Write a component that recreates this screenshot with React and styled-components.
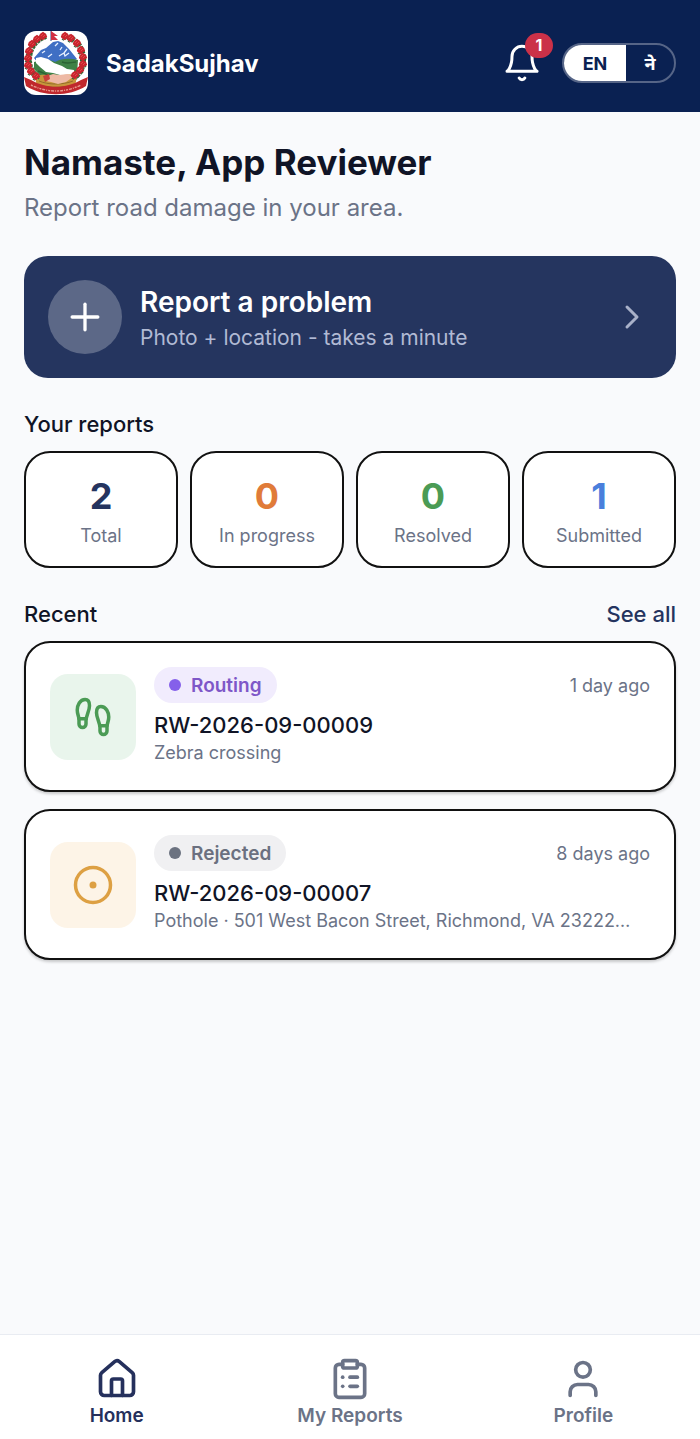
import React from "react";
import styled, { createGlobalStyle } from "styled-components";
import {
  ChevronRight,
  CircleDot,
  ClipboardList,
  Footprints,
  House,
  Plus,
  User,
} from "lucide-react";

const stats = [
  { label: "Total", value: 2, color: "#25345f" },
  { label: "In progress", value: 0, color: "#e07b39" },
  { label: "Resolved", value: 0, color: "#4b9b55" },
  { label: "Submitted", value: 1, color: "#4a7fdc" },
];

const reports = [
  {
    id: "RW-2026-09-00009",
    status: "Routing",
    statusColor: "#7e57c8",
    dot: "#8560ea",
    statusBg: "#f1ecfd",
    age: "1 day ago",
    text: "Zebra crossing",
    Icon: Footprints,
    iconColor: "#4b9b55",
    iconBg: "#e9f5ec",
  },
  {
    id: "RW-2026-09-00007",
    status: "Rejected",
    statusColor: "#6b7080",
    dot: "#6b7280",
    statusBg: "#f0f0f2",
    age: "8 days ago",
    text: "Pothole · 501 West Bacon Street, Richmond, VA 23222…",
    Icon: CircleDot,
    iconColor: "#dda043",
    iconBg: "#fdf4e7",
  },
];

const tabs = [
  { label: "Home", Icon: House, active: true },
  { label: "My Reports", Icon: ClipboardList },
  { label: "Profile", Icon: User },
];

// Rhododendrons of the wreath, left side then right side
const flowers = [
  [19, 5], [13, 8], [8, 13], [5, 20], [4, 27], [4, 34], [7, 40], [12, 45],
  [41, 5], [47, 7], [53, 12], [57, 19], [59, 26], [59, 33], [56, 39], [51, 44],
];

const Emblem = () => (
  <EmblemSvg viewBox="0 0 64 64" role="img" aria-label="Emblem of Nepal">
    <rect width="64" height="64" fill="#fff" />
    <path
      d="M22 5C12 8 5 17 5 29c0 8 4 15 11 19M40 5c13 3 19 12 19 24 0 8-4 15-11 19"
      fill="none"
      stroke="#3c6b3a"
      strokeWidth="6"
      strokeDasharray="3 1"
    />
    <path d="M10 27 17 19l5-2 7-6 5-1 5 2 6 6 8 10-9 5-17-2-13 1z" fill="#3f6fc4" />
    <path
      d="m31 15 3-3m4 4-2 3m7-1-3 4m-5 3 5-3 1 3 4-3m-21 4 4-3m-7-3-3 2"
      fill="none"
      stroke="#e8f1ff"
      strokeWidth="1.3"
    />
    <path d="M10 31c8-2 15-3 21 0 7-4 15-4 23-2l-1 14-10 4H18l-8-9z" fill="#3f8146" />
    <path d="M38 31c5 2 9 1 14 0M14 40c4 1 7 3 10 4" fill="none" stroke="#2c6334" strokeWidth="1.4" />
    <path
      d="m12 27 5-1 7 2 6 4 8 3 5 3 7 1 1 6-7 1-8-2-7-2-7-1-6-5-4-4z"
      fill="#fff"
    />
    <path d="M11 46c8-4 13-2 20 0 8-2 14-4 22-1l-2 11-19 4-19-4z" fill="#c8963c" />
    <path
      d="M15 50c9 4 24 4 34 0M14 54c10 3 25 3 36 0"
      fill="none"
      stroke="#926f2b"
      strokeWidth="1"
    />
    <path d="m21 46 8-3 6 1 9-1 5 3-7 5-8 2-7-2-5-1z" fill="#eeb9a5" />
    <path d="m19 45 6-2 1 5-5 3z" fill="#c9403b" />
    {flowers.map(([x, y]) => (
      <g key={`${x}-${y}`} transform={`translate(${x} ${y}) scale(1.05)`}>
        <path d="m-4 1 1-3 3-2 3 2 1 3-3 2-1 1-2-1z" fill="#c9252f" />
        <path d="m-2 0 2-2M0 1l2-2" stroke="#e8504f" strokeWidth="0.8" />
        <path d="m-3 3 2 1m3-1 1-1" stroke="#315f35" strokeWidth="1" />
      </g>
    ))}
    <path d="M27 0v10" stroke="#354a8b" strokeWidth="1" />
    <path d="m27 0 7 5h-4l4 4h-7z" fill="#d12f43" />
    <path
      d="M0 46l7 3c15 9 35 9 50 0l7-3-2 9c-17 11-43 11-60 0z"
      fill="#c0282d"
    />
    <path
      d="M7 54c16 8 34 8 50 0"
      fill="none"
      stroke="#e99a8e"
      strokeWidth="1.4"
      strokeDasharray="2 1 3 1 1 1"
    />
  </EmblemSvg>
);

const BellIcon = () => (
  <svg
    width="40"
    height="40"
    viewBox="0 0 24 24"
    fill="none"
    stroke="#fff"
    strokeWidth="1.8"
    strokeLinecap="round"
    strokeLinejoin="round"
    aria-hidden="true"
  >
    <path d="M6 8a6 6 0 0 1 12 0c0 7 3 9 3 9H3s3-2 3-9" />
    <path d="M10.3 21a1.94 1.94 0 0 0 3.4 0" />
  </svg>
);

const App = () => {
  return (
    <Page>
      <GlobalStyle />
      <Header>
        <Emblem />
        <Brand>SadakSujhav</Brand>
        <BellButton type="button" aria-label="Notifications">
          <BellIcon />
          <Badge>1</Badge>
        </BellButton>
        <LanguageSwitch>
          <Language type="button" $active>
            EN
          </Language>
          <Language type="button" lang="ne">
            ने
          </Language>
        </LanguageSwitch>
      </Header>

      <Main>
        <Greeting>Namaste, App Reviewer</Greeting>
        <Subtitle>Report road damage in your area.</Subtitle>

        <ReportButton type="button">
          <PlusCircle>
            <Plus size={44} strokeWidth={1.8} />
          </PlusCircle>
          <ReportText>
            <strong>Report a problem</strong>
            <span>Photo + location - takes a minute</span>
          </ReportText>
          <ChevronRight size={40} strokeWidth={1.8} color="#a9b1c9" />
        </ReportButton>

        <SectionHead>
          <h2>Your reports</h2>
        </SectionHead>
        <Stats>
          {stats.map((stat) => (
            <Stat key={stat.label} $color={stat.color}>
              <strong>{stat.value}</strong>
              <span>{stat.label}</span>
            </Stat>
          ))}
        </Stats>

        <SectionHead>
          <h2>Recent</h2>
          <a href="#reports">See all</a>
        </SectionHead>
        <Reports>
          {reports.map(({ Icon, ...report }) => (
            <Report key={report.id}>
              <Tile $color={report.iconColor} $bg={report.iconBg}>
                <Icon size={42} strokeWidth={2} />
              </Tile>
              <ReportBody>
                <ReportTop>
                  <Status
                    $color={report.statusColor}
                    $bg={report.statusBg}
                    $dot={report.dot}
                  >
                    {report.status}
                  </Status>
                  <Age>{report.age}</Age>
                </ReportTop>
                <h3>{report.id}</h3>
                <p>{report.text}</p>
              </ReportBody>
            </Report>
          ))}
        </Reports>
      </Main>

      <TabBar>
        {tabs.map(({ label, Icon, active }) => (
          <Tab key={label} href="#" $active={active}>
            <Icon size={44} strokeWidth={2} />
            {label}
          </Tab>
        ))}
      </TabBar>
    </Page>
  );
};

const GlobalStyle = createGlobalStyle`
  * {
    margin: 0;
    padding: 0;
    box-sizing: border-box;
  }

  body {
    background: #f9fafc;
    color: #101426;
    font-family: Inter, "Noto Sans", sans-serif;
  }

  button {
    border: none;
    background: none;
    color: inherit;
    font-family: inherit;
    cursor: pointer;
  }

  a {
    text-decoration: none;
  }
`;

const Page = styled.div`
  display: flex;
  flex-direction: column;
  min-height: 100vh;
`;

const Header = styled.header`
  display: flex;
  align-items: center;
  padding: 31px 24px 17px;
  background: #0a2152;
  color: #fff;
`;

const EmblemSvg = styled.svg`
  width: 64px;
  height: 64px;
  border-radius: 12px;
`;

const Brand = styled.div`
  flex: 1;
  margin-left: 18px;
  font-size: 24px;
  font-weight: 700;
`;

const BellButton = styled.button`
  position: relative;
  display: flex;
  margin-right: 20px;
`;

const Badge = styled.span`
  position: absolute;
  top: -10px;
  right: -11px;
  width: 28px;
  height: 25px;
  border-radius: 13px;
  background: #cb3148;
  font-size: 16px;
  font-weight: 700;
  line-height: 25px;
  text-align: center;
`;

const LanguageSwitch = styled.div`
  display: flex;
  height: 40px;
  border: 2px solid #566587;
  border-radius: 20px;
  overflow: hidden;
`;

const Language = styled.button`
  width: ${({ $active }) => ($active ? "62px" : "48px")};
  background: ${({ $active }) => ($active ? "#fff" : "transparent")};
  color: ${({ $active }) => ($active ? "#0a2152" : "#fff")};
  font-size: 18px;
  font-weight: 700;
`;

const Main = styled.main`
  flex: 1;
  padding: 28px 24px;
`;

const Greeting = styled.h1`
  font-size: 35px;
  font-weight: 700;
  line-height: 44px;
`;

const Subtitle = styled.p`
  margin: 8px 0 32px;
  color: #6b7387;
  font-size: 24px;
  line-height: 32px;
`;

const ReportButton = styled.button`
  display: flex;
  align-items: center;
  width: 100%;
  padding: 22px 24px;
  border-radius: 24px;
  background: #25355f;
  color: #fff;
  text-align: left;
`;

const PlusCircle = styled.span`
  display: flex;
  align-items: center;
  justify-content: center;
  width: 74px;
  height: 74px;
  border-radius: 50%;
  background: #5c6887;
`;

const ReportText = styled.span`
  flex: 1;
  margin-left: 18px;
  padding-top: 6px;

  strong,
  span {
    display: block;
    line-height: 36px;
  }

  strong {
    font-size: 28px;
    font-weight: 600;
  }

  span {
    color: #b1bad4;
    font-size: 21px;
  }
`;

const SectionHead = styled.div`
  display: flex;
  justify-content: space-between;
  margin: 32px 0 13px;
  font-size: 22px;
  line-height: 28px;

  h2,
  a {
    font-size: inherit;
    font-weight: 500;
  }

  a {
    color: #25345f;
  }
`;

const Stats = styled.div`
  display: grid;
  grid-template-columns: repeat(4, 1fr);
  gap: 12px;
`;

const Stat = styled.div`
  padding: 21px 0 18px;
  border: 2px solid #111;
  border-radius: 26px;
  background: #fff;
  text-align: center;

  strong,
  span {
    display: block;
  }

  strong {
    margin-bottom: 6px;
    color: ${({ $color }) => $color};
    font-size: 36px;
    font-weight: 700;
    line-height: 44px;
  }

  span {
    color: #6b7387;
    font-size: 18px;
    line-height: 24px;
  }
`;

const Reports = styled.div`
  display: grid;
  gap: 17px;
`;

const Report = styled.article`
  display: flex;
  align-items: center;
  min-width: 0;
  padding: 24px 24px 23px;
  border: 2px solid #111;
  border-radius: 26px;
  background: #fff;
  box-shadow: 0 2px 3px rgba(0, 0, 0, 0.2);
`;

const Tile = styled.div`
  display: flex;
  flex-shrink: 0;
  align-items: center;
  justify-content: center;
  width: 86px;
  height: 86px;
  border-radius: 18px;
  background: ${({ $bg }) => $bg};
  color: ${({ $color }) => $color};
`;

const ReportBody = styled.div`
  flex: 1;
  min-width: 0;
  margin-left: 18px;

  h3 {
    margin-top: 8px;
    font-size: 22px;
    font-weight: 500;
    line-height: 28px;
  }

  p {
    overflow: hidden;
    color: #6b7387;
    font-size: 18px;
    line-height: 28px;
    text-overflow: ellipsis;
    white-space: nowrap;
  }
`;

const ReportTop = styled.div`
  display: flex;
  align-items: center;
  justify-content: space-between;
`;

const Status = styled.span`
  display: flex;
  align-items: center;
  gap: 10px;
  height: 36px;
  padding: 0 15px;
  border-radius: 18px;
  background: ${({ $bg }) => $bg};
  color: ${({ $color }) => $color};
  font-size: 19px;
  font-weight: 600;

  &::before {
    width: 12px;
    height: 12px;
    border-radius: 50%;
    background: ${({ $dot }) => $dot};
    content: "";
  }
`;

const Age = styled.time`
  color: #6b7387;
  font-size: 18px;
`;

const TabBar = styled.nav`
  display: grid;
  grid-template-columns: repeat(3, 1fr);
  padding: 22px 0 10px;
  border-top: 1px solid #e9ecf2;
  background: #fff;
`;

const Tab = styled.a`
  display: flex;
  flex-direction: column;
  align-items: center;
  gap: 2px;
  color: ${({ $active }) => ($active ? "#25305c" : "#6b7387")};
  font-size: 19px;
  font-weight: 600;
  line-height: 26px;
`;

export default App;
